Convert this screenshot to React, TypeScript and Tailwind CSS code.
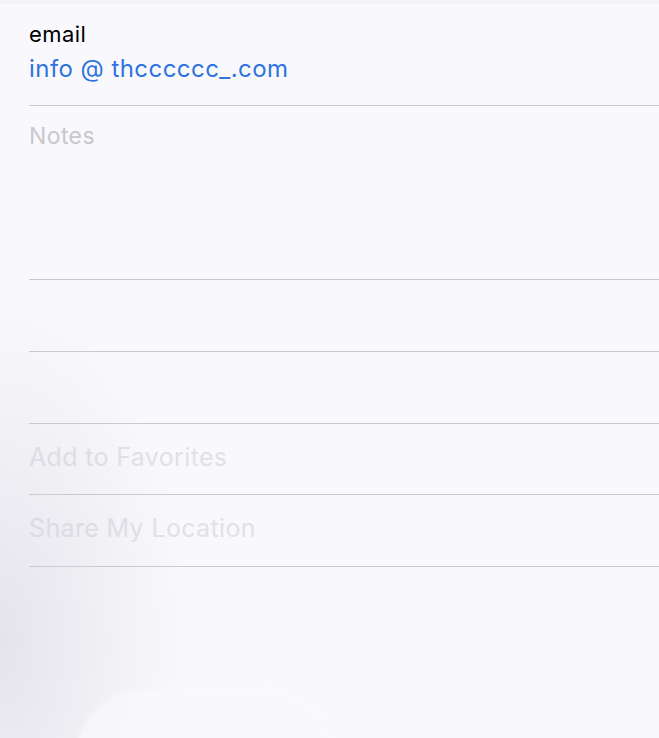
import React from "react";

const font = { fontFamily: "Inter, 'Noto Sans', 'Liberation Sans', sans-serif" };

function Row({ label, h }: { label: string; h: string }) {
  return (
    <div className={`${h} border-b border-[#c9c9ce] flex items-center pb-[3px]`}>
      <span className="text-[25px] tracking-[0.35px] text-[#e1e1e6]">{label}</span>
    </div>
  );
}

export default function App() {
  return (
    <div
      className="relative w-[659px] h-[738px] overflow-hidden bg-[#f9f9fd] antialiased"
      style={font}
    >
      <div className="h-[4px] bg-[#f2f2f7]" />
      <div className="pl-[29px]">
        <div className="h-[102px] border-b border-[#c9c9ce] pt-[16px]">
          <div className="text-[22px] leading-[28px] tracking-[0.45px] text-black">email</div>
          <div className="text-[24px] leading-[32px] mt-[5px] tracking-[0.45px] text-[#2f73de]">
            info @ thcccccc_.com
          </div>
        </div>
        <div className="h-[174px] border-b border-[#c9c9ce] pt-[15px]">
          <div className="text-[23px] leading-[30px] tracking-[0.4px] text-[#c7c7cc]">Notes</div>
        </div>
        <div className="h-[72px] border-b border-[#c9c9ce]" />
        <div className="h-[72px] border-b border-[#c9c9ce]" />
        <Row label="Add to Favorites" h="h-[71px]" />
        <Row label="Share My Location" h="h-[72px]" />
      </div>
      <div className="pointer-events-none absolute inset-0 bg-[radial-gradient(ellipse_190px_350px_at_0px_640px,rgba(205,205,215,0.48),rgba(205,205,215,0)_100%)]" />
      <div className="pointer-events-none absolute left-[75px] top-[690px] w-[260px] h-[140px] rounded-full bg-[#f9f9fd] opacity-80 blur-[2px]" />
    </div>
  );
}
